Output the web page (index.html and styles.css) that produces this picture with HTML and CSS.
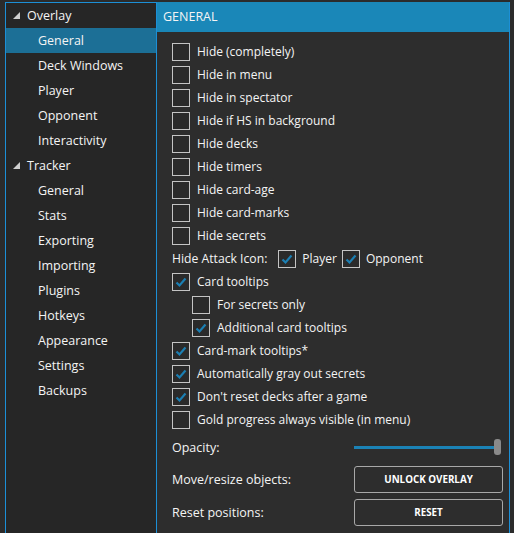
FILE: index.html
```html
<!DOCTYPE html>
<html>
<head>
<meta charset="utf-8">
<link rel="stylesheet" href="styles.css">
</head>
<body>
<div class="window">
  <nav class="tree">
    <div class="node"><svg class="tri" width="8" height="8" viewBox="0 0 8 8"><polygon points="7,0 7,7 0,7"/></svg>Overlay</div>
    <div class="leaf selected">General</div>
    <div class="leaf">Deck Windows</div>
    <div class="leaf">Player</div>
    <div class="leaf">Opponent</div>
    <div class="leaf">Interactivity</div>
    <div class="node"><svg class="tri" width="8" height="8" viewBox="0 0 8 8"><polygon points="7,0 7,7 0,7"/></svg>Tracker</div>
    <div class="leaf">General</div>
    <div class="leaf">Stats</div>
    <div class="leaf">Exporting</div>
    <div class="leaf">Importing</div>
    <div class="leaf">Plugins</div>
    <div class="leaf">Hotkeys</div>
    <div class="leaf">Appearance</div>
    <div class="leaf">Settings</div>
    <div class="leaf">Backups</div>
  </nav>
  <main class="main">
    <header class="header">GENERAL</header>
    <div class="content">
      <div class="row"><span class="box"></span>Hide (completely)</div>
      <div class="row"><span class="box"></span>Hide in menu</div>
      <div class="row"><span class="box"></span>Hide in spectator</div>
      <div class="row"><span class="box"></span>Hide if HS in background</div>
      <div class="row"><span class="box"></span>Hide decks</div>
      <div class="row"><span class="box"></span>Hide timers</div>
      <div class="row"><span class="box"></span>Hide card-age</div>
      <div class="row"><span class="box"></span>Hide card-marks</div>
      <div class="row"><span class="box"></span>Hide secrets</div>
      <div class="row attack">
        <span class="attack-label">Hide Attack Icon:</span>
        <span class="box checked"><svg width="16" height="16" viewBox="0 0 16 16"><path d="M3.5 8.5 L6.5 11.5 L12.5 4.5"/></svg></span><span class="opt">Player</span>
        <span class="box checked second"><svg width="16" height="16" viewBox="0 0 16 16"><path d="M3.5 8.5 L6.5 11.5 L12.5 4.5"/></svg></span><span class="opt">Opponent</span>
      </div>
      <div class="row"><span class="box checked"><svg width="16" height="16" viewBox="0 0 16 16"><path d="M3.5 8.5 L6.5 11.5 L12.5 4.5"/></svg></span>Card tooltips</div>
      <div class="row sub"><span class="box"></span>For secrets only</div>
      <div class="row sub"><span class="box checked"><svg width="16" height="16" viewBox="0 0 16 16"><path d="M3.5 8.5 L6.5 11.5 L12.5 4.5"/></svg></span>Additional card tooltips</div>
      <div class="row"><span class="box checked"><svg width="16" height="16" viewBox="0 0 16 16"><path d="M3.5 8.5 L6.5 11.5 L12.5 4.5"/></svg></span>Card-mark tooltips*</div>
      <div class="row"><span class="box checked"><svg width="16" height="16" viewBox="0 0 16 16"><path d="M3.5 8.5 L6.5 11.5 L12.5 4.5"/></svg></span>Automatically gray out secrets</div>
      <div class="row"><span class="box checked"><svg width="16" height="16" viewBox="0 0 16 16"><path d="M3.5 8.5 L6.5 11.5 L12.5 4.5"/></svg></span>Don't reset decks after a game</div>
      <div class="row"><span class="box"></span>Gold progress always visible (in menu)</div>
      <div class="setting opacity">
        <span class="setting-label">Opacity:</span>
        <div class="slider"><div class="track"></div><div class="thumb"></div></div>
      </div>
      <div class="setting first-btn">
        <span class="setting-label">Move/resize objects:</span>
        <button class="btn">UNLOCK OVERLAY</button>
      </div>
      <div class="setting">
        <span class="setting-label">Reset positions:</span>
        <button class="btn">RESET</button>
      </div>
    </div>
  </main>
</div>
</body>
</html>
```
FILE: styles.css
```css
html, body {
  margin: 0;
  height: 100%;
  background: #2b2b2b;
  overflow: hidden;
}
body {
  font-family: "Open Sans", "Noto Sans", sans-serif;
  font-size: 12px;
  color: #f4f4f4;
}
.window {
  display: flex;
  height: 100%;
  padding: 2px 0 0 5px;
  box-sizing: border-box;
}
.tree {
  width: 150px;
  background: #262626;
  border: 1px solid #1c8fd6;
  border-bottom: none;
  font-size: 12.5px;
}
.node, .leaf {
  height: 25px;
  line-height: 25px;
  white-space: nowrap;
}
.node {
  display: flex;
  align-items: center;
  padding-left: 7px;
}
.tri {
  fill: #cfcfcf;
  margin-right: 6px;
  margin-top: 1px;
}
.leaf {
  padding-left: 32px;
}
.leaf.selected {
  background: #1c6f96;
}
.main {
  width: 352px;
  background: #2d2d2d;
  border-right: 1px solid #1c8fd6;
  display: flex;
  flex-direction: column;
}
.header {
  height: 30px;
  line-height: 29px;
  background: #1a87b8;
  padding-left: 6px;
  font-size: 12.5px;
  color: #f4f4f4;
}
.content {
  padding: 8px 0 0 15px;
}
.row {
  height: 23px;
  display: flex;
  align-items: center;
  white-space: nowrap;
}
.row.sub {
  padding-left: 20px;
}
.box {
  width: 16px;
  height: 16px;
  border: 1px solid #c4c4c4;
  background: #2a2a2a;
  margin-right: 7px;
  flex: none;
  display: flex;
  align-items: center;
  justify-content: center;
}
.box svg {
  display: block;
}
.box path {
  fill: none;
  stroke: #1b7fb3;
  stroke-width: 2.2;
}
.attack-label {
  font-size: 12.2px;
  margin-right: 11px;
}
.attack .box {
  margin-right: 6px;
}
.attack .box.second {
  margin-left: 5px;
}
.setting {
  display: flex;
  align-items: center;
  justify-content: space-between;
  padding-right: 6px;
  height: 33px;
}
.setting.opacity {
  height: 30px;
  margin-top: 1px;
}
.setting.first-btn {
  margin-top: 1px;
}
.setting-label {
  font-size: 12.5px;
}
.slider {
  position: relative;
  width: 149px;
  height: 18px;
  display: flex;
  align-items: center;
}
.track {
  width: 142px;
  height: 3px;
  background: #1b82b5;
}
.thumb {
  position: absolute;
  right: 2px;
  top: 1px;
  width: 7px;
  height: 16px;
  border-radius: 3px;
  background: #8a8a8a;
}
.btn {
  width: 149px;
  height: 27px;
  background: #2d2d2d;
  border: 1px solid #a8a8a8;
  border-radius: 3px;
  color: #ffffff;
  font-family: "Open Sans", "Noto Sans", sans-serif;
  font-weight: bold;
  font-size: 9.8px;
  padding: 0;
}
```
